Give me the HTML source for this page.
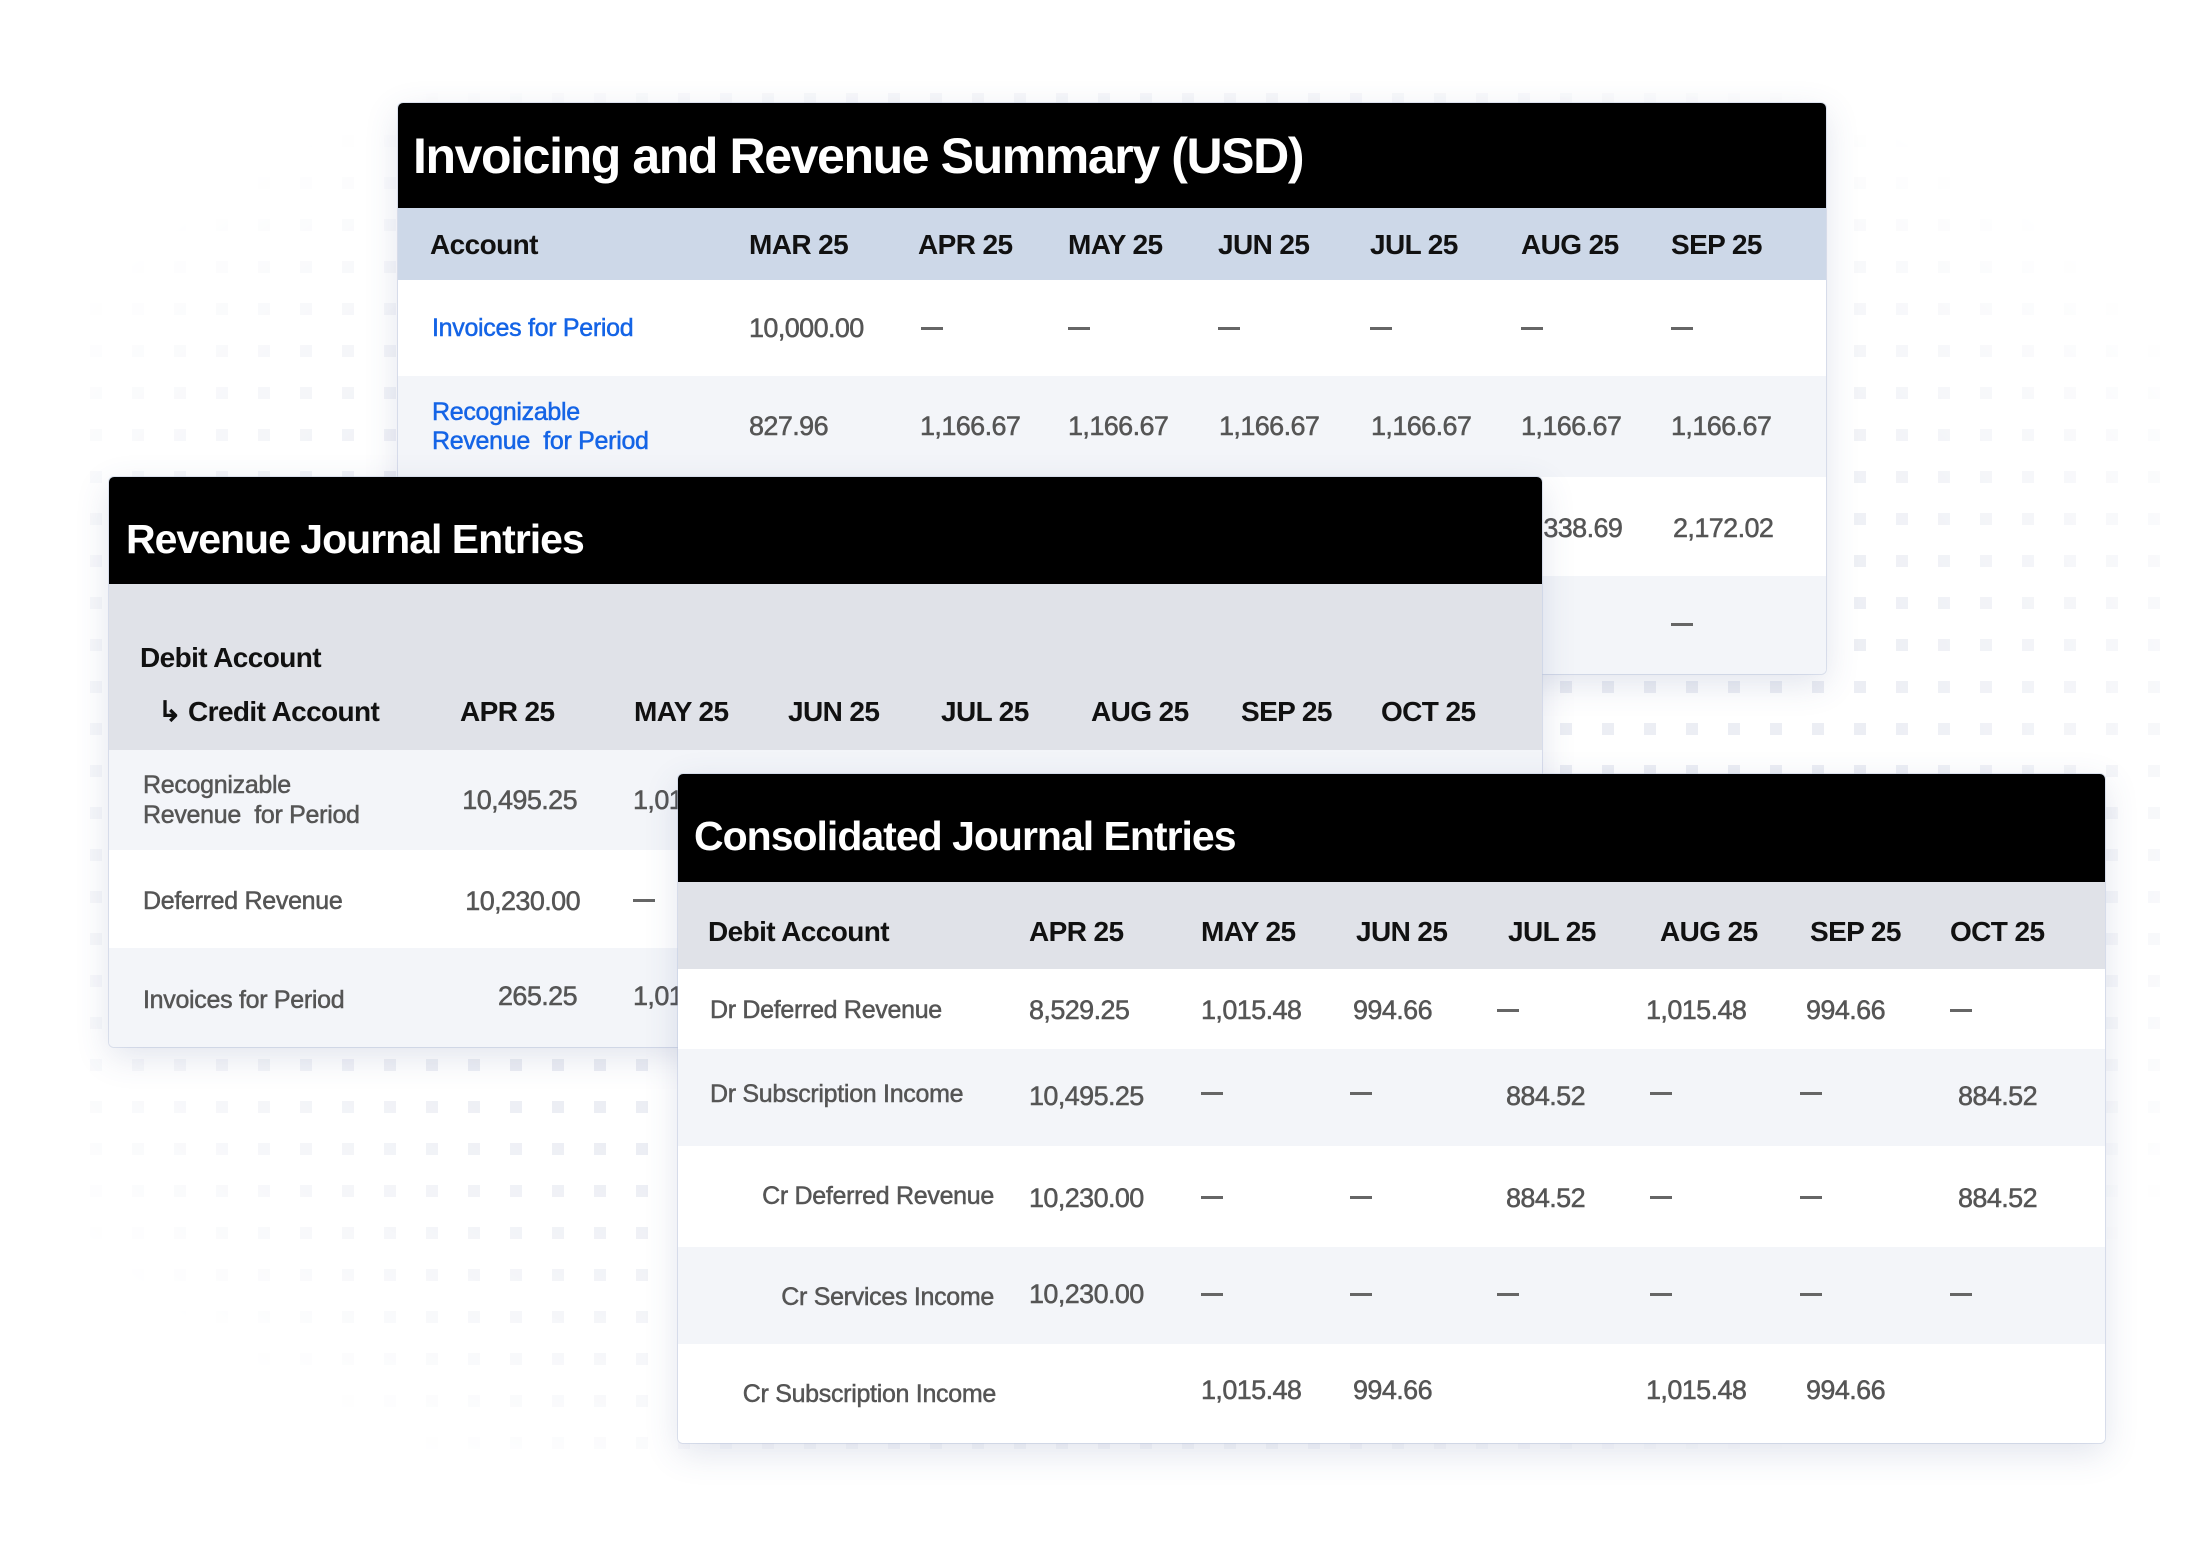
<!DOCTYPE html>
<html><head><meta charset="utf-8"><style>
html,body{margin:0;padding:0;background:#fff;}
body{width:2208px;height:1542px;position:relative;overflow:hidden;font-family:"Liberation Sans",sans-serif;}
.card{position:absolute;background:#fff;border-radius:5px;overflow:hidden;box-shadow:0 10px 34px rgba(70,90,140,0.16),0 0 0 1px rgba(200,210,230,0.5);}
.bar{position:absolute;left:0;right:0;}
.t{position:absolute;white-space:nowrap;}
.title{color:#fff;font-weight:bold;font-size:50px;letter-spacing:-1.4px;line-height:60px;}
.h{color:#111;font-weight:bold;font-size:28px;line-height:32px;letter-spacing:-0.6px;}
.n{color:#555;font-size:27px;line-height:32px;letter-spacing:-0.6px;-webkit-text-stroke:0.5px #555;}
.l{color:#555;font-size:25px;line-height:30px;letter-spacing:-0.3px;-webkit-text-stroke:0.5px #555;}
.b{color:#1464e6;font-size:25px;line-height:30px;letter-spacing:-0.3px;-webkit-text-stroke:0.5px #1464e6;}
.d{position:absolute;width:22px;height:3px;background:#666;}
.r{text-align:right;}
</style></head><body>

<svg width="2208" height="1542" style="position:absolute;left:0;top:0">
<defs>
<pattern id="p" x="90" y="93" width="42" height="42" patternUnits="userSpaceOnUse"><rect width="12" height="12" fill="#eceef4"/></pattern>
<radialGradient id="g" cx="0.5" cy="0.5" r="0.6"><stop offset="0.6" stop-color="#fff"/><stop offset="1" stop-color="#000"/></radialGradient>
<mask id="m"><rect x="60" y="85" width="2100" height="1370" fill="url(#g)"/></mask>
</defs>
<rect x="60" y="85" width="2100" height="1370" fill="url(#p)" mask="url(#m)"/>
</svg>

<!-- Card 1 -->
<div class="card" style="left:398px;top:103px;width:1428px;height:571px;">
<div class="bar" style="top:0;height:105px;background:#000"></div>
<div class="bar" style="top:105px;height:72px;background:#cdd8e8"></div>
<div class="bar" style="top:177px;height:96px;background:#fff"></div>
<div class="bar" style="top:273px;height:101px;background:#f3f5f9"></div>
<div class="bar" style="top:374px;height:99px;background:#fff"></div>
<div class="bar" style="top:473px;height:98px;background:#f3f5f9"></div>
</div>
<div class="t title" style="left:413px;top:126px;">Invoicing and Revenue Summary (USD)</div>
<div class="t h" style="left:430px;top:229px">Account</div>
<div class="t h" style="left:749px;top:229px">MAR 25</div>
<div class="t h" style="left:918px;top:229px">APR 25</div>
<div class="t h" style="left:1068px;top:229px">MAY 25</div>
<div class="t h" style="left:1218px;top:229px">JUN 25</div>
<div class="t h" style="left:1370px;top:229px">JUL 25</div>
<div class="t h" style="left:1521px;top:229px">AUG 25</div>
<div class="t h" style="left:1671px;top:229px">SEP 25</div>
<div class="t b" style="left:432px;top:313px">Invoices for Period</div>
<div class="t n" style="left:749px;top:312px">10,000.00</div>
<div class="d" style="left:921px;top:327px"></div><div class="d" style="left:1068px;top:327px"></div><div class="d" style="left:1218px;top:327px"></div><div class="d" style="left:1370px;top:327px"></div><div class="d" style="left:1521px;top:327px"></div><div class="d" style="left:1671px;top:327px"></div>
<div class="t b" style="left:432px;top:397px">Recognizable</div>
<div class="t b" style="left:432px;top:426px">Revenue&nbsp; for Period</div>
<div class="t n" style="left:749px;top:410px">827.96</div>
<div class="t n" style="left:920px;top:410px">1,166.67</div>
<div class="t n" style="left:1068px;top:410px">1,166.67</div>
<div class="t n" style="left:1219px;top:410px">1,166.67</div>
<div class="t n" style="left:1371px;top:410px">1,166.67</div>
<div class="t n" style="left:1521px;top:410px">1,166.67</div>
<div class="t n" style="left:1671px;top:410px">1,166.67</div>
<div class="t n" style="left:1522px;top:512px">1,338.69</div>
<div class="t n" style="left:1673px;top:512px">2,172.02</div>
<div class="d" style="left:1671px;top:623px"></div>

<!-- Card 2 -->
<div class="card" style="left:109px;top:477px;width:1433px;height:570px;">
<div class="bar" style="top:0;height:107px;background:#000"></div>
<div class="bar" style="top:107px;height:166px;background:#e0e2e8"></div>
<div class="bar" style="top:273px;height:100px;background:#f3f5f9"></div>
<div class="bar" style="top:373px;height:98px;background:#fff"></div>
<div class="bar" style="top:471px;height:99px;background:#f3f5f9"></div>
</div>
<div class="t title" style="left:126px;top:509px;font-size:41px;letter-spacing:-1px">Revenue Journal Entries</div>
<div class="t h" style="left:140px;top:642px">Debit Account</div>
<div class="t h" style="left:158px;top:696px">↳ Credit Account</div>
<div class="t h" style="left:460px;top:696px">APR 25</div>
<div class="t h" style="left:634px;top:696px">MAY 25</div>
<div class="t h" style="left:788px;top:696px">JUN 25</div>
<div class="t h" style="left:941px;top:696px">JUL 25</div>
<div class="t h" style="left:1091px;top:696px">AUG 25</div>
<div class="t h" style="left:1241px;top:696px">SEP 25</div>
<div class="t h" style="left:1381px;top:696px">OCT 25</div>
<div class="t l" style="left:143px;top:770px">Recognizable</div>
<div class="t l" style="left:143px;top:800px">Revenue&nbsp; for Period</div>
<div class="t n r" style="left:377px;width:200px;top:784px">10,495.25</div>
<div class="t n" style="left:633px;top:784px">1,015.48</div>
<div class="t l" style="left:143px;top:886px">Deferred Revenue</div>
<div class="t n r" style="left:380px;width:200px;top:885px">10,230.00</div>
<div class="d" style="left:633px;top:899px"></div>
<div class="t l" style="left:143px;top:985px">Invoices for Period</div>
<div class="t n r" style="left:377px;width:200px;top:980px">265.25</div>
<div class="t n" style="left:633px;top:980px">1,015.48</div>

<!-- Card 3 -->
<div class="card" style="left:678px;top:774px;width:1427px;height:669px;">
<div class="bar" style="top:0;height:108px;background:#000"></div>
<div class="bar" style="top:108px;height:87px;background:#e0e2e8"></div>
<div class="bar" style="top:195px;height:80px;background:#fff"></div>
<div class="bar" style="top:275px;height:97px;background:#f3f5f9"></div>
<div class="bar" style="top:372px;height:101px;background:#fff"></div>
<div class="bar" style="top:473px;height:97px;background:#f3f5f9"></div>
<div class="bar" style="top:570px;height:99px;background:#fff"></div>
</div>
<div class="t title" style="left:694px;top:806px;font-size:41px;letter-spacing:-1px">Consolidated Journal Entries</div>
<div class="t h" style="left:708px;top:916px">Debit Account</div>
<div class="t h" style="left:1029px;top:916px">APR 25</div>
<div class="t h" style="left:1201px;top:916px">MAY 25</div>
<div class="t h" style="left:1356px;top:916px">JUN 25</div>
<div class="t h" style="left:1508px;top:916px">JUL 25</div>
<div class="t h" style="left:1660px;top:916px">AUG 25</div>
<div class="t h" style="left:1810px;top:916px">SEP 25</div>
<div class="t h" style="left:1950px;top:916px">OCT 25</div>

<div class="t l" style="left:710px;top:995px">Dr Deferred Revenue</div>
<div class="t n" style="left:1029px;top:994px">8,529.25</div>
<div class="t n" style="left:1201px;top:994px">1,015.48</div>
<div class="t n" style="left:1353px;top:994px">994.66</div>
<div class="d" style="left:1497px;top:1009px"></div>
<div class="t n" style="left:1646px;top:994px">1,015.48</div>
<div class="t n" style="left:1806px;top:994px">994.66</div>
<div class="d" style="left:1950px;top:1009px"></div>

<div class="t l" style="left:710px;top:1079px">Dr Subscription Income</div>
<div class="t n" style="left:1029px;top:1080px">10,495.25</div>
<div class="d" style="left:1201px;top:1092px"></div>
<div class="d" style="left:1350px;top:1092px"></div>
<div class="t n" style="left:1506px;top:1080px">884.52</div>
<div class="d" style="left:1650px;top:1092px"></div>
<div class="d" style="left:1800px;top:1092px"></div>
<div class="t n" style="left:1958px;top:1080px">884.52</div>

<div class="t l r" style="left:694px;width:300px;top:1181px">Cr Deferred Revenue</div>
<div class="t n" style="left:1029px;top:1182px">10,230.00</div>
<div class="d" style="left:1201px;top:1196px"></div>
<div class="d" style="left:1350px;top:1196px"></div>
<div class="t n" style="left:1506px;top:1182px">884.52</div>
<div class="d" style="left:1650px;top:1196px"></div>
<div class="d" style="left:1800px;top:1196px"></div>
<div class="t n" style="left:1958px;top:1182px">884.52</div>

<div class="t l r" style="left:694px;width:300px;top:1282px">Cr Services Income</div>
<div class="t n" style="left:1029px;top:1278px">10,230.00</div>
<div class="d" style="left:1201px;top:1293px"></div>
<div class="d" style="left:1350px;top:1293px"></div>
<div class="d" style="left:1497px;top:1293px"></div>
<div class="d" style="left:1650px;top:1293px"></div>
<div class="d" style="left:1800px;top:1293px"></div>
<div class="d" style="left:1950px;top:1293px"></div>

<div class="t l r" style="left:696px;width:300px;top:1379px">Cr Subscription Income</div>
<div class="t n" style="left:1201px;top:1374px">1,015.48</div>
<div class="t n" style="left:1353px;top:1374px">994.66</div>
<div class="t n" style="left:1646px;top:1374px">1,015.48</div>
<div class="t n" style="left:1806px;top:1374px">994.66</div>

</body></html>
